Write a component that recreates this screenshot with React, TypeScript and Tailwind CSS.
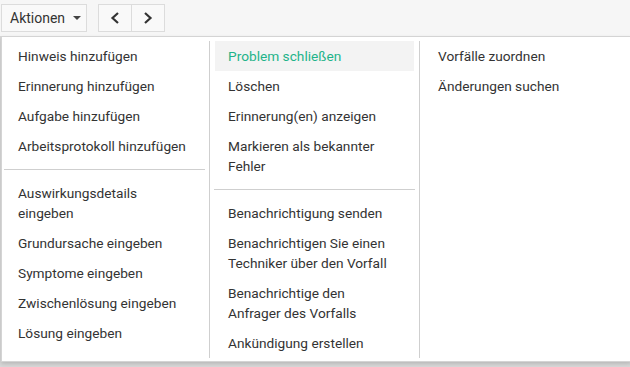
import React from 'react';

type Item = { label: string[]; active?: boolean };

const col1: Item[][] = [
  [
    { label: ['Hinweis hinzufügen'] },
    { label: ['Erinnerung hinzufügen'] },
    { label: ['Aufgabe hinzufügen'] },
    { label: ['Arbeitsprotokoll hinzufügen'] },
  ],
  [
    { label: ['Auswirkungsdetails', 'eingeben'] },
    { label: ['Grundursache eingeben'] },
    { label: ['Symptome eingeben'] },
    { label: ['Zwischenlösung eingeben'] },
    { label: ['Lösung eingeben'] },
  ],
];

const col2: Item[][] = [
  [
    { label: ['Problem schließen'], active: true },
    { label: ['Löschen'] },
    { label: ['Erinnerung(en) anzeigen'] },
    { label: ['Markieren als bekannter', 'Fehler'] },
  ],
  [
    { label: ['Benachrichtigung senden'] },
    { label: ['Benachrichtigen Sie einen', 'Techniker über den Vorfall'] },
    { label: ['Benachrichtige den', 'Anfrager des Vorfalls'] },
    { label: ['Ankündigung erstellen'] },
  ],
];

const col3: Item[][] = [[{ label: ['Vorfälle zuordnen'] }, { label: ['Änderungen suchen'] }]];

const MenuColumn = ({ groups, last, first }: { groups: Item[][]; last?: boolean; first?: boolean }) => (
  <div className={`flex-1 ${first ? 'pl-[3px] pr-[5px]' : 'px-[5px]'} ${last ? '' : 'border-r border-[#cfcfcf]'}`}>
    {groups.map((group, gi) => (
      <div key={gi}>
        {gi > 0 && <div className="my-2 h-px bg-[#cfcfcf] mx-[-1px]" />}
        {group.map((item, i) => (
          <div
            key={i}
            className={`px-[13px] py-[5px] leading-5 cursor-pointer ${
              item.active ? 'bg-[#f3f3f3] text-[#1fb38a]' : 'text-[#333] hover:bg-[#f3f3f3]'
            }`}
          >
            {item.label.map((line, li) => (
              <div key={li}>{line}</div>
            ))}
          </div>
        ))}
      </div>
    ))}
  </div>
);

export default function App() {
  return (
    <div
      className="h-[367px] w-[630px] bg-[#d8d8d8] overflow-hidden text-[13.7px]"
      style={{ fontFamily: 'Roboto, Lato, sans-serif' }}
    >
      <div className="h-[36px] bg-[#f6f6f6] flex items-center pl-[1px] gap-[11px]">
        <button className="h-[28px] w-[86px] border border-[#dcdcdc] bg-[#f9f9f9] flex items-center pl-2 gap-[8px] text-[14px] text-[#333]">
          Aktionen
          <span className="w-0 h-0 border-l-[4px] border-r-[4px] border-t-[4px] border-l-transparent border-r-transparent border-t-[#444]" />
        </button>
        <div className="flex h-[28px] border border-[#dcdcdc] bg-[#f9f9f9]">
          <button className="w-[33px] flex items-center justify-center border-r border-[#dcdcdc]">
            <svg width="12" height="14" viewBox="0 0 12 14" fill="none" stroke="#333" strokeWidth="2.2">
              <path d="M9 2 L3.5 7 L9 12" />
            </svg>
          </button>
          <button className="w-[32px] flex items-center justify-center">
            <svg width="12" height="14" viewBox="0 0 12 14" fill="none" stroke="#333" strokeWidth="2.2">
              <path d="M3 2 L8.5 7 L3 12" />
            </svg>
          </button>
        </div>
      </div>
      <div className="ml-[1px] w-[630px] h-[326px] bg-white border border-[#d4d4d4] shadow-[0_2px_4px_rgba(0,0,0,0.15)] flex pt-[4px] pb-[3px]">
        <div className="flex w-full">
          <div className="w-[208px] flex">
            <MenuColumn groups={col1} first />
          </div>
          <div className="w-[210px] flex">
            <MenuColumn groups={col2} />
          </div>
          <div className="flex-1 flex">
            <MenuColumn groups={col3} last />
          </div>
        </div>
      </div>
    </div>
  );
}
